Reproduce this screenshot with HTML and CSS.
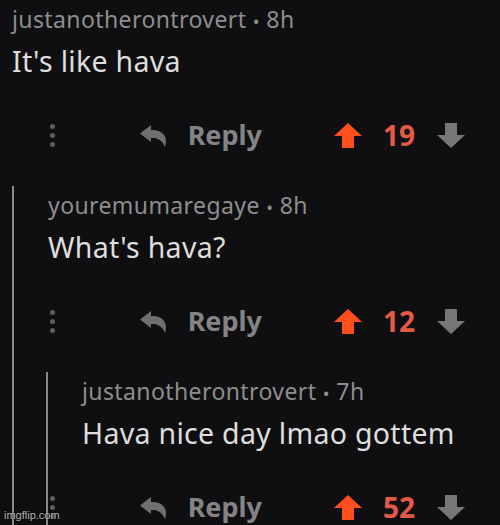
FILE: index.html
```html
<!DOCTYPE html>
<html>
<head>
<meta charset="utf-8">
<link rel="stylesheet" href="styles.css">
</head>
<body>
<div class="page">
  <div class="comment">
    <div class="meta">justanotherontrovert <span class="sep">•</span> 8h</div>
    <div class="text">It's like hava</div>
    <div class="actions">
      <span class="more"><i></i><i></i><i></i></span>
      <svg class="reply-icon" viewBox="0 0 28 22"><path d="M0 8.5 L11 0 V5 H13 C22 5 28.5 11 25 22 C22 15.5 18 13 13 13 H11 V17 Z"/></svg>
      <span class="reply-label">Reply</span>
      <svg class="up" viewBox="0 0 28 25"><path d="M14 0 L28 13 H20 V25 H8 V13 H0 Z"/></svg>
      <span class="count">19</span>
      <svg class="down" viewBox="0 0 28 25"><path d="M14 25 L28 12 H20 V0 H8 V12 H0 Z"/></svg>
    </div>
    <div class="replies">
      <div class="comment">
        <div class="meta">youremumaregaye <span class="sep">•</span> 8h</div>
        <div class="text">What's hava?</div>
        <div class="actions">
          <span class="more"><i></i><i></i><i></i></span>
          <svg class="reply-icon" viewBox="0 0 28 22"><path d="M0 8.5 L11 0 V5 H13 C22 5 28.5 11 25 22 C22 15.5 18 13 13 13 H11 V17 Z"/></svg>
          <span class="reply-label">Reply</span>
          <svg class="up" viewBox="0 0 28 25"><path d="M14 0 L28 13 H20 V25 H8 V13 H0 Z"/></svg>
          <span class="count">12</span>
          <svg class="down" viewBox="0 0 28 25"><path d="M14 25 L28 12 H20 V0 H8 V12 H0 Z"/></svg>
        </div>
        <div class="replies nested">
          <div class="comment">
            <div class="meta">justanotherontrovert <span class="sep">•</span> 7h</div>
            <div class="text">Hava nice day lmao gottem</div>
            <div class="actions">
              <span class="more"><i></i><i></i><i></i></span>
              <svg class="reply-icon" viewBox="0 0 28 22"><path d="M0 8.5 L11 0 V5 H13 C22 5 28.5 11 25 22 C22 15.5 18 13 13 13 H11 V17 Z"/></svg>
              <span class="reply-label">Reply</span>
              <svg class="up" viewBox="0 0 28 25"><path d="M14 0 L28 13 H20 V25 H8 V13 H0 Z"/></svg>
              <span class="count">52</span>
              <svg class="down" viewBox="0 0 28 25"><path d="M14 25 L28 12 H20 V0 H8 V12 H0 Z"/></svg>
            </div>
          </div>
        </div>
      </div>
    </div>
  </div>
  <div class="watermark">imgflip.com</div>
</div>
</body>
</html>
```
FILE: styles.css
```css
html, body {
  margin: 0;
  padding: 0;
  height: 525px;
  overflow: hidden;
  background: #0f0f11;
}

.page {
  position: relative;
  height: 525px;
  box-sizing: border-box;
  padding: 4px 35px 0 12px;
  font-family: "Noto Sans", "Open Sans", sans-serif;
  overflow: hidden;
}

.meta {
  font-size: 23px;
  line-height: 30px;
  letter-spacing: 0.4px;
  color: #8e8e8e;
  white-space: nowrap;
}

.sep {
  font-size: 18px;
}

.text {
  margin-top: 6px;
  font-size: 28.5px;
  line-height: 38px;
  letter-spacing: 0.3px;
  color: #dedede;
  white-space: nowrap;
}

.actions {
  display: flex;
  justify-content: flex-end;
  align-items: center;
  height: 36px;
  margin-top: 37px;
}

.actions > * {
  flex-shrink: 0;
}

.more {
  display: flex;
  flex-direction: column;
  gap: 4px;
  width: 5px;
  margin-right: 85px;
}

.more i {
  display: block;
  width: 5px;
  height: 5px;
  border-radius: 50%;
  background: #5e5e60;
}

.reply-icon {
  width: 28px;
  height: 22px;
  fill: #6f6f71;
  margin-right: 20px;
  margin-top: 2px;
}

.reply-label {
  font-size: 27px;
  font-weight: 700;
  line-height: 36px;
  color: #848486;
  margin-right: 72px;
}

.up, .down {
  width: 28px;
  height: 25px;
}

.up {
  fill: #ff4f1c;
  margin-right: 20px;
}

.down {
  fill: #77777a;
  margin-left: 21px;
}

.count {
  width: 34px;
  text-align: center;
  font-size: 28px;
  font-weight: 700;
  line-height: 36px;
  color: #e35a45;
}

.replies {
  margin-top: 33px;
  padding: 4px 0 20px 34px;
  border-left: 2px solid #8a8a8c;
}

.replies.nested {
  margin-left: -2px;
}

.watermark {
  position: absolute;
  left: 4px;
  bottom: 4px;
  font-family: "Liberation Sans", Arial, sans-serif;
  font-size: 11px;
  line-height: 12px;
  color: rgba(235, 235, 235, 0.75);
  text-shadow: 0 0 2px #000;
}
```
